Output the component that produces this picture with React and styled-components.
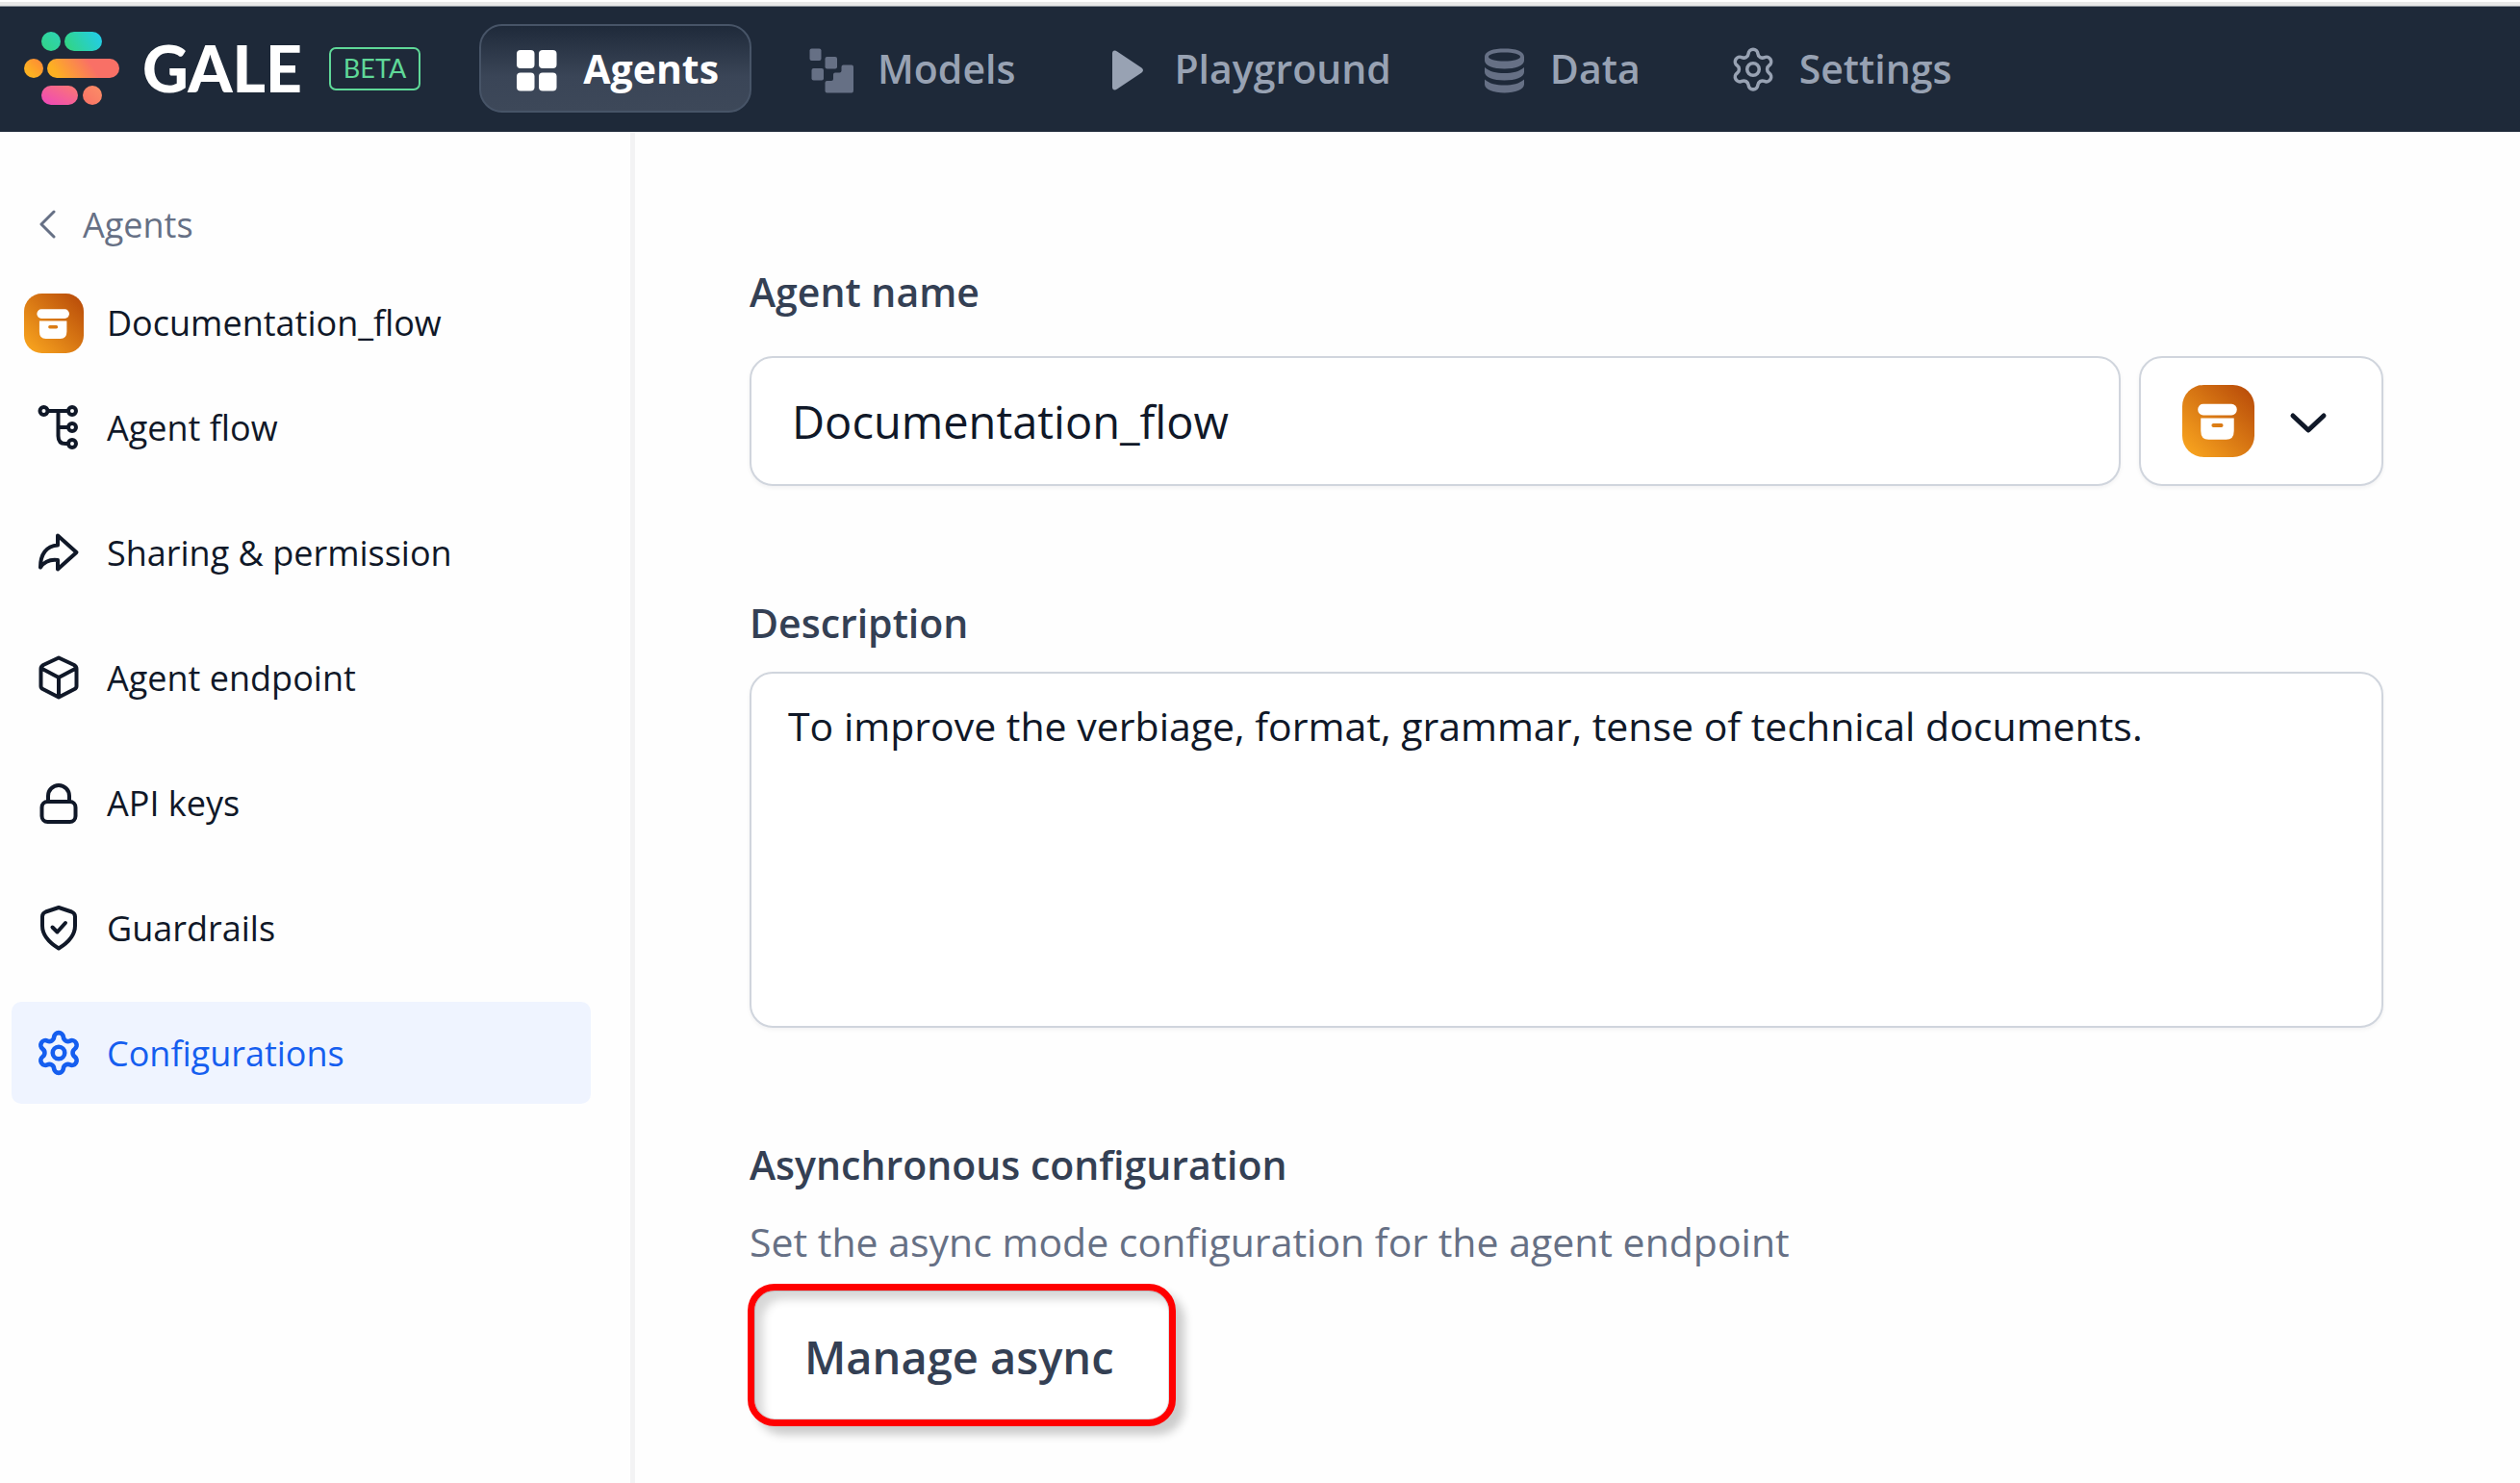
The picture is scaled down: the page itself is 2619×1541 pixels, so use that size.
import React from "react";
import styled, { createGlobalStyle } from "styled-components";
import { Settings } from "lucide-react";

const GlobalStyle = createGlobalStyle`
  *, *::before, *::after { box-sizing: border-box; }
  body {
    margin: 0;
    background: #fefefe;
    color: #101828;
    font-family: "Open Sans", "Noto Sans", sans-serif;
  }
  button, input, textarea { font: inherit; color: inherit; margin: 0; }
  a { color: inherit; text-decoration: none; }
`;

const Shell = styled.div`
  display: flex;
  flex-direction: column;
  min-height: 100vh;
`;

const Header = styled.header`
  display: flex;
  align-items: center;
  padding: 18px 25px 20px;
  background: #1e2939;
`;

const WindowEdge = styled.div`
  height: 7px;
  border-top: 2px solid #ffffff;
  border-bottom: 1px solid #8f959d;
  background: #e8e8e8;
`;

const Brand = styled.a`
  display: flex;
  align-items: center;
  margin-right: 61px;
`;

const BrandName = styled.span`
  margin: 0 28px 0 24px;
  color: #ffffff;
  font: 900 66px/76px Lato, sans-serif;
`;

const BetaTag = styled.span`
  display: flex;
  align-items: center;
  height: 45px;
  padding: 0 13px;
  border: 2px solid #5fd898;
  border-radius: 7px;
  color: #5fd898;
  font: 400 27px/40px Lato, sans-serif;
`;

const TopNav = styled.nav`
  display: flex;
  gap: 23px;
`;

const TopLink = styled.a`
  display: flex;
  align-items: center;
  gap: 24px;
  height: 92px;
  padding: 0 32px 0 34px;
  border: 2px solid ${(p) => (p.$active ? "#475467" : "transparent")};
  border-radius: 24px;
  background: ${(p) => (p.$active ? "linear-gradient(#1f2a3a, #3a4557 60%, #3d4859)" : "none")};
  color: ${(p) => (p.$active ? "#ffffff" : "#98a2b3")};
  font-size: 41px;
  font-weight: ${(p) => (p.$active ? 700 : 600)};
  line-height: 56px;
`;

const Glyph = styled.svg`
  flex: none;
  width: 48px;
  height: 48px;
  overflow: visible;
`;

const Body = styled.div`
  display: flex;
  flex: 1;
`;

const Sidebar = styled.aside`
  flex: none;
  width: 660px;
  padding: 63px 41px 24px 12px;
  border-right: 5px solid #f3f3f4;
`;

const BackLink = styled.a`
  display: flex;
  align-items: center;
  gap: 26px;
  height: 66px;
  padding-left: 28px;
  color: #667085;
  font-size: 36px;
`;

const AgentHeading = styled.div`
  display: flex;
  align-items: center;
  gap: 24px;
  margin: 39px 0 24px;
  padding-left: 13px;
  font-size: 36px;
  font-weight: 500;
  line-height: 48px;
`;

const SideNav = styled.nav`
  display: flex;
  flex-direction: column;
  gap: 24px;
`;

const SideLink = styled.a`
  display: flex;
  align-items: center;
  gap: 26px;
  height: 106px;
  padding: 0 25px;
  border-radius: 10px;
  background: ${(p) => (p.$active ? "#eff4ff" : "none")};
  color: ${(p) => (p.$active ? "#155eef" : "#101828")};
  font-size: 36px;
  font-weight: 500;
`;

const Main = styled.main`
  flex: 1;
  min-width: 0;
  padding: 138px 142px 60px 119px;
`;

const Form = styled.form`
  display: flex;
  flex-direction: column;
  gap: 114px;
`;

const Field = styled.section`
  display: flex;
  flex-direction: column;
  gap: ${(p) => p.$gap}px;
`;

const Label = styled.label`
  color: #344054;
  font-size: 41px;
  font-weight: 600;
  line-height: 56px;
`;

const InputRow = styled.div`
  display: flex;
  gap: 19px;
`;

const TextInput = styled.input`
  flex: 1;
  min-width: 0;
  height: 135px;
  padding: 0 42px;
  border: 2px solid #d0d5dd;
  border-radius: 24px;
  background: #ffffff;
  box-shadow: 0 2px 4px rgba(16, 24, 40, 0.05);
  font-size: 47px;
`;

const IconPicker = styled.button`
  display: flex;
  align-items: center;
  gap: 32px;
  padding: 0 52px 0 43px;
  border: 2px solid #d0d5dd;
  border-radius: 24px;
  background: #ffffff;
  box-shadow: 0 2px 4px rgba(16, 24, 40, 0.05);
`;

const TextArea = styled.textarea`
  display: block;
  width: 100%;
  height: 370px;
  padding: 24px 38px;
  border: 2px solid #d0d5dd;
  border-radius: 24px;
  background: #ffffff;
  box-shadow: 0 2px 4px rgba(16, 24, 40, 0.05);
  font-size: 41px;
  line-height: 60px;
  resize: none;
`;

const Heading = styled(Label)`
  margin: 0;
`;

const Hint = styled.p`
  margin: 0;
  color: #667085;
  font-size: 41px;
  line-height: 56px;
`;

const ManageButton = styled.button`
  align-self: flex-start;
  height: 148px;
  margin: -8px 0 0 -2px;
  padding: 4px 57px 0 52px;
  border: 7px solid #ff0000;
  border-radius: 28px;
  background: #ffffff;
  box-shadow:
    9px 9px 10px rgba(0, 0, 0, 0.2),
    inset 0 0 0 1px rgba(52, 64, 84, 0.18),
    inset 9px 9px 10px rgba(0, 0, 0, 0.16);
  color: #344054;
  font-size: 47px;
  font-weight: 600;
`;

function Logo() {
  return (
    <svg width="99" height="76" viewBox="0 0 99 76" aria-hidden="true">
      <defs>
        <linearGradient id="lg-green" gradientUnits="userSpaceOnUse" x1="46" y1="20" x2="80" y2="0">
          <stop offset="0" stopColor="#32d583" />
          <stop offset="1" stopColor="#22ccee" />
        </linearGradient>
        <linearGradient id="lg-dot" x1="0" y1="1" x2="1" y2="0">
          <stop offset="0" stopColor="#32d583" />
          <stop offset="1" stopColor="#2ed3b7" />
        </linearGradient>
        <linearGradient id="lg-amber" gradientUnits="userSpaceOnUse" x1="36" y1="48" x2="66" y2="28">
          <stop offset="0" stopColor="#fdb022" />
          <stop offset="1" stopColor="#f97066" />
        </linearGradient>
        <linearGradient id="lg-orange" x1="0" y1="1" x2="1" y2="0">
          <stop offset="0.3" stopColor="#fdb022" />
          <stop offset="1" stopColor="#fd853a" />
        </linearGradient>
        <linearGradient id="lg-pink" x1="0" y1="1" x2="1" y2="0">
          <stop offset="0" stopColor="#ee46bc" />
          <stop offset="1" stopColor="#fb7a70" />
        </linearGradient>
        <linearGradient id="lg-coral" x1="0" y1="1" x2="1" y2="0">
          <stop offset="0" stopColor="#f97066" />
          <stop offset="1" stopColor="#fb8f66" />
        </linearGradient>
      </defs>
      <circle cx="28" cy="10" r="10" fill="url(#lg-dot)" />
      <rect x="42" y="0" width="39" height="20" rx="10" fill="url(#lg-green)" />
      <circle cx="10" cy="38" r="10" fill="url(#lg-orange)" />
      <rect x="24" y="28" width="75" height="20" rx="10" fill="url(#lg-amber)" />
      <rect x="18" y="56" width="38" height="20" rx="10" fill="url(#lg-pink)" />
      <circle cx="71" cy="66" r="10" fill="url(#lg-coral)" />
    </svg>
  );
}

function AgentBadge({ size }) {
  const id = `badge-${size}`;
  return (
    <svg width={size} height={size} viewBox="0 0 74 74" aria-hidden="true">
      <defs>
        <linearGradient id={id} x1="0" y1="1" x2="1" y2="0">
          <stop offset="0.05" stopColor="#f9a51f" />
          <stop offset="1" stopColor="#b54708" />
        </linearGradient>
      </defs>
      <rect width="74" height="74" rx="22" fill={`url(#${id})`} />
      <rect x="16" y="19.500" width="40" height="11.500" rx="5.500" fill="#ffffff" />
      <path
        fill="#ffffff"
        fillRule="evenodd"
        d="M19 34H53V47Q53 56 45 56H27Q19 56 19 47ZM32 39.500a2 2 0 0 0 0 4h8a2 2 0 0 0 0-4Z"
      />
    </svg>
  );
}

function GridIcon() {
  return (
    <Glyph viewBox="0 0 48 48" fill="currentColor" aria-hidden="true">
      <rect x="3" y="5" width="18.500" height="19" rx="4" />
      <rect x="26" y="5" width="18.500" height="19" rx="4" />
      <rect x="3" y="28.500" width="18.500" height="19" rx="4" />
      <rect x="26" y="28.500" width="18.500" height="19" rx="4" />
    </Glyph>
  );
}

function ModelsIcon() {
  return (
    <Glyph viewBox="0 0 48 48" fill="#667085" aria-hidden="true">
      <rect x="1.500" y="3.500" width="12" height="12.500" rx="2" />
      <rect x="17.500" y="12" width="12.500" height="12.500" rx="2" />
      <rect x="3.500" y="24" width="12.500" height="12.500" rx="2" />
      <path d="M36.500 20.500H45Q47 20.500 47 22.500V47Q47 49.500 45 49.500H19.500Q17.500 49.500 17.500 47.500V39Q17.500 37 19.500 37H24Q26 37 26 35V30.500Q26 28.500 28 28.500H32.500Q34.500 28.500 34.500 26.500V22.500Q34.500 20.500 36.500 20.500Z" />
    </Glyph>
  );
}

function PlayIcon() {
  return (
    <Glyph viewBox="0 0 48 48" fill="currentColor" aria-hidden="true">
      <path d="M8 8.500C8 5.500 10.500 4.500 13 6.500L38.500 23.500Q41.500 26 38.500 28.500L13 45.500C10.500 47.500 8 46.500 8 43.500Z" />
    </Glyph>
  );
}

function DataIcon() {
  return (
    <Glyph viewBox="0 0 48 48" fill="#667085" aria-hidden="true">
      <path
        fillRule="evenodd"
        d="M4 12C4 6 13 3.500 24.500 3.500S45 6 45 12V16C45 21 36 24.500 24.500 24.500S4 21 4 16ZM8 12C8 14.500 15 16.500 24.500 16.500S41 14.500 41 12S34 7.500 24.500 7.500S8 9.500 8 12Z"
      />
      <path d="M4 23C9 27.500 16 29 24.500 29S40 27.500 45 23V28C45 33 36 36.500 24.500 36.500S4 33 4 28Z" />
      <path d="M4 35.500C9 40 16 41.500 24.500 41.500S40 40 45 35.500V40.500C45 46 36 49.500 24.500 49.500S4 46 4 40.500Z" />
    </Glyph>
  );
}

function LineIcon({ children }) {
  return (
    <Glyph
      viewBox="0 0 48 48"
      fill="none"
      stroke="currentColor"
      strokeWidth="4"
      strokeLinecap="round"
      strokeLinejoin="round"
      aria-hidden="true"
    >
      {children}
    </Glyph>
  );
}

const icons = {
  flow: (
    <LineIcon>
      <circle cx="8.500" cy="7" r="4" />
      <circle cx="38" cy="7" r="4" />
      <circle cx="38" cy="24" r="4" />
      <circle cx="38" cy="41" r="4" />
      <path d="M13 7H33M23.500 7V33Q23.500 41 31 41H33M23.500 24H33" />
    </LineIcon>
  ),
  share: (
    <LineIcon>
      <path d="M23 6.500L42.500 24L23 41.500V32C15 31 9.500 33 5 39.500C5 26 11 17.500 23 16.500Z" />
    </LineIcon>
  ),
  cube: (
    <LineIcon>
      <path d="M24 3.500L40 11Q42.500 12.500 42.500 15V33Q42.500 35 40.500 36L24 44.500L7.500 36Q5.500 35 5.500 33V15Q5.500 12.500 8 11ZM7 15L24 24L41 15M24 24V44" />
    </LineIcon>
  ),
  lock: (
    <LineIcon>
      <rect x="6.500" y="23" width="35" height="21" rx="6" />
      <path d="M13 23V17a11 11 0 0 1 22 0v6" />
    </LineIcon>
  ),
  shield: (
    <LineIcon>
      <path d="M24 3L37.500 7.500Q41 9 41 12.500V22C41 33 33 40 24 45.500C15 40 7 33 7 22V12.500Q7 9 10.500 7.500ZM17.500 23.500L22.500 28.500L31 19" />
    </LineIcon>
  ),
  cog: <Settings size={48} viewBox="0.5 0.5 23 23" strokeWidth={2.2} aria-hidden="true" />,
};

const topLinks = [
  { label: "Agents", icon: <GridIcon />, active: true },
  { label: "Models", icon: <ModelsIcon /> },
  { label: "Playground", icon: <PlayIcon /> },
  { label: "Data", icon: <DataIcon /> },
  { label: "Settings", icon: <Settings size={48} viewBox="0.5 0 23 23" strokeWidth={1.7} aria-hidden="true" /> },
];

const sideLinks = [
  { label: "Agent flow", icon: "flow" },
  { label: "Sharing & permission", icon: "share" },
  { label: "Agent endpoint", icon: "cube" },
  { label: "API keys", icon: "lock" },
  { label: "Guardrails", icon: "shield" },
  { label: "Configurations", icon: "cog", active: true },
];

export default function App() {
  return (
    <Shell>
      <GlobalStyle />
      <WindowEdge />
      <Header>
        <Brand href="#home">
          <Logo />
          <BrandName>GALE</BrandName>
          <BetaTag>BETA</BetaTag>
        </Brand>
        <TopNav aria-label="Primary">
          {topLinks.map((link) => (
            <TopLink key={link.label} href={`#${link.label.toLowerCase()}`} $active={link.active}>
              {link.icon}
              {link.label}
            </TopLink>
          ))}
        </TopNav>
      </Header>
      <Body>
        <Sidebar>
          <BackLink href="#agents">
            <svg width="20" height="30" viewBox="0 0 20 30" fill="none" stroke="currentColor" strokeWidth="3" strokeLinecap="round" strokeLinejoin="round" aria-hidden="true">
              <path d="M16 2L3 15L16 28" />
            </svg>
            Agents
          </BackLink>
          <AgentHeading>
            <AgentBadge size={62} />
            Documentation_flow
          </AgentHeading>
          <SideNav aria-label="Agent">
            {sideLinks.map((link) => (
              <SideLink key={link.label} href={`#${link.icon}`} $active={link.active}>
                {icons[link.icon]}
                {link.label}
              </SideLink>
            ))}
          </SideNav>
        </Sidebar>
        <Main>
          <Form onSubmit={(event) => event.preventDefault()}>
            <Field $gap={39}>
              <Label htmlFor="agent-name">Agent name</Label>
              <InputRow>
                <TextInput id="agent-name" type="text" defaultValue="Documentation_flow" />
                <IconPicker type="button" aria-label="Choose icon" aria-haspopup="listbox">
                  <AgentBadge size={75} />
                  <svg width="48" height="48" viewBox="0 0 48 48" fill="none" stroke="#101828" strokeWidth="5" strokeLinecap="round" strokeLinejoin="round" aria-hidden="true">
                    <path d="M8 18L24 33L40 18" />
                  </svg>
                </IconPicker>
              </InputRow>
            </Field>
            <Field $gap={23}>
              <Label htmlFor="agent-description">Description</Label>
              <TextArea
                id="agent-description"
                spellCheck={false}
                defaultValue="To improve the verbiage, format, grammar, tense of technical documents."
              />
            </Field>
            <Field $gap={24}>
              <Heading as="h2">Asynchronous configuration</Heading>
              <Hint>Set the async mode configuration for the agent endpoint</Hint>
              <ManageButton type="button">Manage async</ManageButton>
            </Field>
          </Form>
        </Main>
      </Body>
    </Shell>
  );
}
